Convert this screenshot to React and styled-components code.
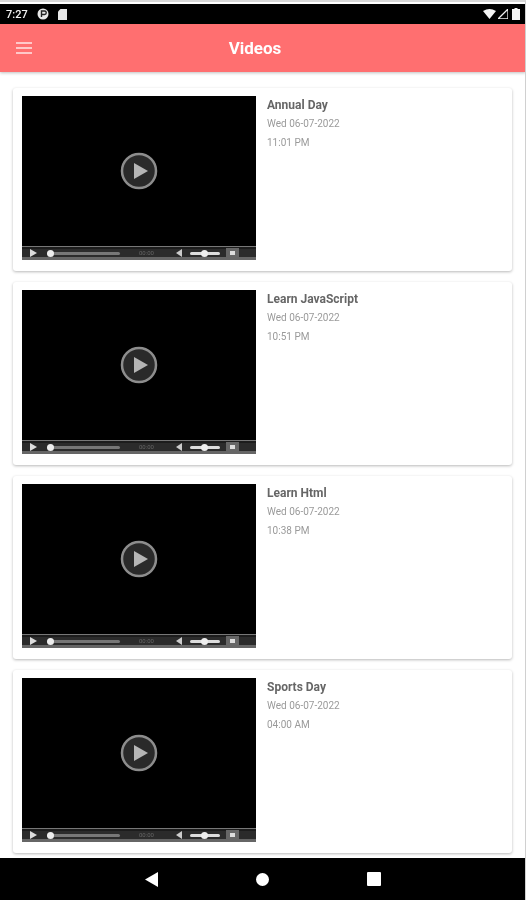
import React from 'react';
import styled, { createGlobalStyle } from 'styled-components';

const CORAL = '#ff6f70';

const videos = [
  { title: 'Annual Day', date: 'Wed 06-07-2022', time: '11:01 PM' },
  { title: 'Learn JavaScript', date: 'Wed 06-07-2022', time: '10:51 PM' },
  { title: 'Learn Html', date: 'Wed 06-07-2022', time: '10:38 PM' },
  { title: 'Sports Day', date: 'Wed 06-07-2022', time: '04:00 AM' },
];

const GlobalStyle = createGlobalStyle`
  html, body {
    margin: 0;
    padding: 0;
    background: #fff;
  }
  body {
    font-family: Roboto, "Liberation Sans", sans-serif;
  }
`;

const Screen = styled.div`
  width: 526px;
  height: 900px;
  display: flex;
  flex-direction: column;
  overflow: hidden;
  background: #fff;
  filter: blur(0.45px);
`;

const StatusBar = styled.div`
  height: 20px;
  margin-top: 4px;
  flex-shrink: 0;
  background: #000;
  color: #f2f2f2;
  display: flex;
  align-items: center;
  padding: 0 6px;
  gap: 9px;
  font-size: 11px;
  font-weight: 500;
`;

const StatusRight = styled.div`
  margin-left: auto;
  display: flex;
  align-items: center;
  gap: 2px;
`;

const AppBar = styled.header`
  height: 48px;
  flex-shrink: 0;
  background: ${CORAL};
  box-shadow: 0 1px 3px rgba(0, 0, 0, 0.25);
  display: flex;
  align-items: center;
  padding: 0 16px;
  position: relative;
  z-index: 1;
`;

const Title = styled.h1`
  flex: 1;
  margin: 0 32px 0 0;
  text-align: center;
  color: #fff;
  font-size: 17px;
  line-height: 48px;
  font-weight: 700;
`;

const List = styled.main`
  flex: 1;
  min-height: 0;
  overflow: hidden;
  padding: 16px 14px 0 13px;
  display: flex;
  flex-direction: column;
  gap: 11px;
`;

const Card = styled.article`
  height: 183px;
  flex-shrink: 0;
  box-sizing: border-box;
  padding: 8px 9px;
  display: flex;
  gap: 11px;
  background: #fff;
  border-radius: 3px;
  box-shadow: 0 1px 3px rgba(0, 0, 0, 0.28);
`;

const Player = styled.div`
  width: 234px;
  height: 164px;
  flex-shrink: 0;
  background: #000;
  display: flex;
  flex-direction: column;
`;

const Stage = styled.div`
  flex: 1;
  display: flex;
  align-items: center;
  justify-content: center;
`;

const Controls = styled.div`
  height: 14px;
  flex-shrink: 0;
  background: linear-gradient(#777 0 1px, #1c1c1c 1px 3px, #2b2b2b 3px 11px, #666 11px);
  display: flex;
  align-items: center;
  padding: 0 4px 0 8px;
`;

const Track = styled.div`
  width: ${(p) => p.$width}px;
  height: 3px;
  margin-left: ${(p) => p.$left}px;
  background: ${(p) => p.$color};
  border-radius: 2px;
  position: relative;
`;

const Knob = styled.span`
  position: absolute;
  left: ${(p) => p.$left}px;
  top: -2px;
  width: 7px;
  height: 7px;
  border-radius: 50%;
  background: #eee;
`;

const TimeLabel = styled.span`
  margin-left: 19px;
  width: 18px;
  color: #666;
  font-size: 6px;
  line-height: 14px;
`;

const FullButton = styled.span`
  width: 13px;
  height: 10px;
  margin-left: 6px;
  background: #666;
  display: flex;
  align-items: center;
  justify-content: center;
  &::after {
    content: '';
    width: 5px;
    height: 4px;
    background: #ddd;
  }
`;

const Info = styled.div`
  display: flex;
  flex-direction: column;
  padding-top: 1px;
`;

const VideoTitle = styled.h2`
  margin: 0 0 4px;
  color: #666;
  font-size: 12px;
  line-height: 16px;
  font-weight: 700;
`;

const Meta = styled.p`
  margin: 0 0 5px;
  color: #9a9a9a;
  font-size: 10px;
  line-height: 14px;
`;

const NavBar = styled.nav`
  height: 42px;
  flex-shrink: 0;
  background: #000;
  display: flex;
  align-items: center;
  justify-content: center;
  gap: 98px;
  padding-right: 1px;
`;

const Edge = styled.div`
  position: absolute;
  top: 0;
  right: 0;
  width: 526px;
  height: 900px;
  box-sizing: border-box;
  border-top: 2px solid #d8d8d8;
  border-right: 1px solid #d0d0d0;
  pointer-events: none;
  z-index: 2;
`;

function PlayBadge() {
  return (
    <svg width="38" height="38" viewBox="0 0 38 38">
      <circle cx="19" cy="19" r="17" fill="#2a2a2a" stroke="#8d8d8d" strokeWidth="2.5" />
      <path d="M14 11 L28 19 L14 27 Z" fill="#b5b5b5" />
    </svg>
  );
}

function VideoPlayer() {
  return (
    <Player>
      <Stage>
        <PlayBadge />
      </Stage>
      <Controls>
        <svg width="7" height="8" viewBox="0 0 7 8">
          <path d="M0 0 L7 4 L0 8 Z" fill="#ddd" />
        </svg>
        <Track $width={73} $left={10} $color="#777">
          <Knob $left={0} />
        </Track>
        <TimeLabel>00:00</TimeLabel>
        <svg width="6" height="8" viewBox="0 0 6 8" style={{ marginLeft: 19 }}>
          <path d="M6 0 L0 4 L6 8 Z" fill="#ccc" />
        </svg>
        <Track $width={30} $left={8} $color="#ddd">
          <Knob $left={11} />
        </Track>
        <FullButton />
      </Controls>
    </Player>
  );
}

function StatusIcons() {
  return (
    <StatusRight>
      <svg width="13" height="10" viewBox="0 0 13 10">
        <path d="M0 2 Q6.5 -2 13 2 L6.5 10 Z" fill="#f5f5f5" />
      </svg>
      <svg width="10" height="10" viewBox="0 0 10 10">
        <path d="M10 0 V10 H0 Z" fill="none" stroke="#f0f0f0" strokeWidth="1.3" />
      </svg>
      <svg width="8" height="12" viewBox="0 0 8 12" style={{ marginLeft: 2 }}>
        <path d="M2.5 0 H5.5 V1 H8 V12 H0 V1 H2.5 Z" fill="#f5f5f5" />
      </svg>
    </StatusRight>
  );
}

export default function App() {
  return (
    <>
      <GlobalStyle />
      <Screen>
        <Edge />
        <StatusBar>
          <span>7:27</span>
          <svg width="12" height="12" viewBox="0 0 12 12">
            <circle cx="6" cy="6" r="5.5" fill="#e8e8e8" />
            <path d="M4.5 9 V3 H7.5 A1.7 1.7 0 0 1 7.5 6.5 H4.5" fill="none" stroke="#222" strokeWidth="1.4" />
          </svg>
          <svg width="9" height="11" viewBox="0 0 9 11">
            <path d="M2.5 0 H9 V11 H0 V2.5 Z" fill="#e8e8e8" />
          </svg>
          <StatusIcons />
        </StatusBar>
        <AppBar>
          <svg width="16" height="12" viewBox="0 0 16 12">
            <path d="M0 1 H16 M0 6 H16 M0 11 H16" stroke="#ffe6e6" strokeWidth="1.6" />
          </svg>
          <Title>Videos</Title>
        </AppBar>
        <List>
          {videos.map((video) => (
            <Card key={video.title}>
              <VideoPlayer />
              <Info>
                <VideoTitle>{video.title}</VideoTitle>
                <Meta>{video.date}</Meta>
                <Meta>{video.time}</Meta>
              </Info>
            </Card>
          ))}
        </List>
        <NavBar>
          <svg width="13" height="15" viewBox="0 0 13 15">
            <path d="M0 7.5 L13 0 V15 Z" fill="#fff" />
          </svg>
          <svg width="13" height="13" viewBox="0 0 13 13">
            <circle cx="6.5" cy="6.5" r="6.5" fill="#fff" />
          </svg>
          <svg width="14" height="14" viewBox="0 0 14 14">
            <rect width="14" height="14" rx="1" fill="#fff" />
          </svg>
        </NavBar>
      </Screen>
    </>
  );
}
